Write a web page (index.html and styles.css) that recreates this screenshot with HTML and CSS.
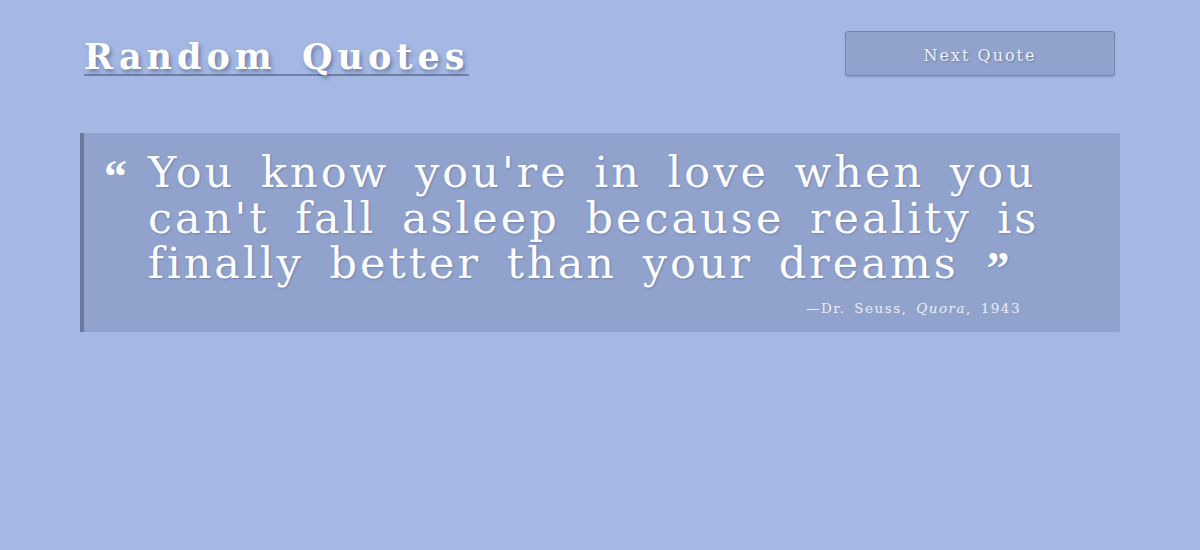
FILE: index.html
```html
<!DOCTYPE html>
<html lang="en">
<head>
<meta charset="utf-8">
<title>Random Quotes</title>
<link rel="stylesheet" href="styles.css">
</head>
<body>
<div class="page">
  <header class="top">
    <h1 class="title">Random Quotes</h1>
    <button class="next">Next Quote</button>
  </header>
  <blockquote class="quote">
    <div class="body">
      <span class="mark open">&#8220;</span>
      <p class="text">You know you're in love when you can't fall asleep because reality is finally better than your dreams <span class="mark close">&#8221;</span></p>
    </div>
    <p class="cite">&mdash;Dr. Seuss, <em>Quora</em>, 1943</p>
  </blockquote>
</div>
</body>
</html>
```
FILE: styles.css
```css
html, body {
  margin: 0;
  padding: 0;
  height: 100%;
}
body {
  background: #a5b8e3;
  font-family: "DejaVu Serif", "Liberation Serif", serif;
  color: #fff;
}
.page {
  width: 1040px;
  margin: 0 auto;
  padding-top: 31px;
}
.top {
  display: flex;
  justify-content: space-between;
  align-items: flex-start;
  padding-left: 4px;
  padding-right: 5px;
}
.title {
  margin: 9px 0 0 0;
  font-family: "DejaVu Serif", serif;
  font-weight: bold;
  font-size: 35px;
  line-height: 34px;
  letter-spacing: 5px;
  word-spacing: 8px;
  color: #fff;
  text-shadow: 2px 3px 4px rgba(60, 75, 120, 0.55);
  border-bottom: 2px solid #6f7fa6;
  padding-bottom: 0;
}
.next {
  width: 270px;
  height: 45px;
  background: #91a3cc;
  border: 1px solid #7687b0;
  border-radius: 3px;
  color: #eef1fa;
  font-family: "DejaVu Serif", serif;
  font-size: 16px;
  letter-spacing: 2px;
  padding-top: 5px;
  text-shadow: 1px 1px 2px rgba(60, 75, 120, 0.5);
  box-shadow: 0 1px 2px rgba(60, 75, 120, 0.3);
  cursor: pointer;
}
.quote {
  margin: 57px 0 0 0;
  background: #91a3cc;
  border-left: 4px solid #6b7a9c;
  border-radius: 0 3px 3px 0;
  padding: 17px 20px 0 20px;
  height: 199px;
  box-sizing: border-box;
}
.body {
  display: flex;
  align-items: flex-start;
}
.text {
  margin: 0;
  font-size: 43px;
  line-height: 45.5px;
  letter-spacing: 3px;
  word-spacing: 9px;
  color: #fbfcff;
  text-shadow: 1px 1px 2px rgba(60, 75, 120, 0.35);
  width: 910px;
}
.mark {
  font-family: "Liberation Serif", serif;
  font-weight: bold;
  font-size: 46px;
  line-height: 1;
  letter-spacing: 0;
}
.mark.open {
  width: 44px;
  flex: none;
  margin-top: 4px;
}
.mark.close {
  display: inline-block;
  vertical-align: -6px;
  margin-left: 2px;
}
.cite {
  margin: 8px 79px 0 0;
  text-align: right;
  font-size: 13.5px;
  letter-spacing: 1.5px;
  word-spacing: 3px;
  color: #e8ecf7;
}
.cite em {
  font-style: italic;
}
```
